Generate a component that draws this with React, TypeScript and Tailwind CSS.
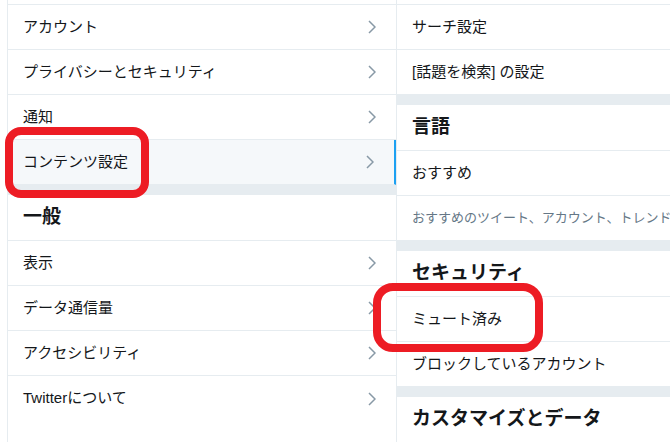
import type React from 'react';

const font = { fontFamily: '"Liberation Sans", "Noto Sans CJK JP", sans-serif' };

export default function App() {
  return (
    <div className="relative flex h-[442px] w-[670px] overflow-hidden bg-white text-[#14171a]" style={font}>
      <div className="w-[7px] shrink-0" />

      {/* left settings list */}
      <div className="w-[389px] shrink-0 border-l border-[#e6ecf0] pt-[4px]">
        <div className="border-t border-[#e6ecf0]">
          <NavRow label="アカウント" />
          <NavRow label="プライバシーとセキュリティ" />
          <NavRow label="通知" />
          <NavRow label="コンテンツ設定" active />
          <Gap />
          <Header title="一般" />
          <NavRow label="表示" />
          <NavRow label="データ通信量" />
          <NavRow label="アクセシビリティ" />
          <NavRow label="Twitterについて" last />
        </div>
      </div>

      {/* right detail panel */}
      <div className="w-[274px] shrink-0 border-l border-[#e6ecf0] pt-[4px]">
        <div className="border-t border-[#e6ecf0]">
          <Row>サーチ設定</Row>
          <Row>[話題を検索] の設定</Row>
          <Gap />
          <Header title="言語" />
          <Row>おすすめ</Row>
          <Row>
            <span className="whitespace-nowrap text-[13px] text-[#657786]">おすすめのツイート、アカウント、トレンドの言語を選択します</span>
          </Row>
          <Gap />
          <Header title="セキュリティ" />
          <Row>ミュート済み</Row>
          <Row>ブロックしているアカウント</Row>
          <Gap />
          <Header title="カスタマイズとデータ" />
        </div>
      </div>

      {/* red annotation marks */}
      <div className="absolute left-[5px] top-[127px] h-[71px] w-[144px] rounded-[16px] border-[8px] border-[#ed1c24]" />
      <div className="absolute left-[373px] top-[283px] h-[69px] w-[170px] rounded-[20px] border-[8px] border-[#ed1c24]" />
    </div>
  );
}

function NavRow({ label, active, last }: { label: string; active?: boolean; last?: boolean }) {
  return (
    <div
      className={`flex h-[45px] items-center justify-between pl-[15px] pr-[20px] text-[15px] ${last ? '' : 'border-b border-[#e6ecf0]'} ${
        active ? 'border-r-2 border-r-[#1da1f2] bg-[#f5f8fa] pr-[18px]' : ''
      }`}
    >
      <span>{label}</span>
      <svg width="8" height="14" viewBox="0 0 8 14" fill="none">
        <path d="M1 1 L7 7 L1 13" stroke="#8899a6" strokeWidth="1.5" />
      </svg>
    </div>
  );
}

function Row({ children }: { children: React.ReactNode }) {
  return (
    <div className="flex h-[45px] items-center overflow-hidden border-b border-[#e6ecf0] pl-[15px] text-[15px]">
      {children}
    </div>
  );
}

function Header({ title }: { title: string }) {
  return (
    <div className="flex h-[46px] items-center border-b border-[#e6ecf0] pl-[15px] text-[19px] font-bold">{title}</div>
  );
}

function Gap() {
  return <div className="h-[10px] bg-[#e6ecf0]" />;
}
